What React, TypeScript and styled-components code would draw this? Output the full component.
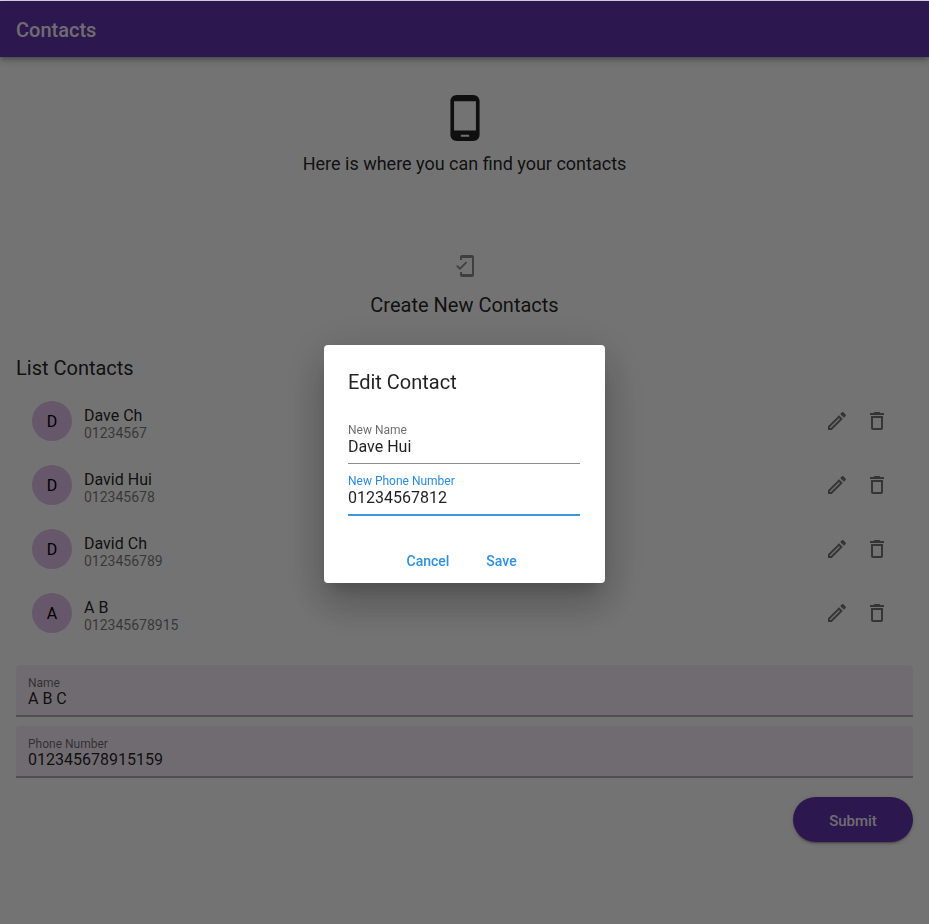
import React from 'react';
import styled, { createGlobalStyle } from 'styled-components';
import { MdPhoneAndroid, MdMobileFriendly, MdOutlineEdit, MdDeleteOutline } from 'react-icons/md';

const GlobalStyle = createGlobalStyle`
  * { box-sizing: border-box; }
  body {
    margin: 0;
    background: #fafafa;
    font-family: Roboto, sans-serif;
    overflow: hidden;
  }
  button, input { font-family: inherit; border: 0; padding: 0; background: none; outline: 0; }
`;

const Page = styled.div`
  display: flex;
  flex-direction: column;
  height: 924px;
  border-top: 1px solid #dcd6f3;
  color: rgba(0, 0, 0, 0.87);
`;

const AppBar = styled.header`
  display: flex;
  align-items: center;
  flex: none;
  height: 56px;
  padding: 2px 16px 0;
  background: #6033ab;
  color: rgba(255, 255, 255, 0.93);
  font-size: 20px;
  font-weight: 500;
  box-shadow: 0 2px 4px -1px rgba(0, 0, 0, 0.2), 0 4px 5px rgba(0, 0, 0, 0.14), 0 1px 10px rgba(0, 0, 0, 0.12);
`;

const Intro = styled.section`
  display: flex;
  flex-direction: column;
  align-items: center;
  padding-top: 36px;
  height: 197px;
`;

const IntroText = styled.p`
  margin: 9px 0 0;
  font-size: 18px;
  line-height: 24px;
`;

const Create = styled.section`
  display: flex;
  flex-direction: column;
  align-items: center;
  height: 100px;
  svg { color: rgba(0, 0, 0, 0.45); }
`;

const Heading = styled.h2`
  margin: 0;
  font-size: 20px;
  line-height: 24px;
  font-weight: 400;
`;

const CreateHeading = styled(Heading)`
  margin-top: 15px;
`;

const Content = styled.main`
  display: flex;
  flex-direction: column;
  padding: 2px 16px 0;
`;

const List = styled.ul`
  margin: 9px 0 0;
  padding: 0;
  list-style: none;
`;

const Row = styled.li`
  display: flex;
  align-items: center;
  height: 64px;
  padding: 0 24px 0 16px;
`;

const Avatar = styled.span`
  display: grid;
  place-items: center;
  width: 40px;
  height: 40px;
  margin-right: 12px;
  border-radius: 50%;
  background: #e1bee7;
  color: #000;
  font-size: 16px;
`;

const Details = styled.div`
  flex: 1;
  padding-top: 6px;
`;

const ContactName = styled.div`
  font-size: 16px;
  line-height: 18px;
`;

const Phone = styled.div`
  font-size: 14px;
  line-height: 17px;
  color: rgba(0, 0, 0, 0.54);
`;

const Actions = styled.div`
  display: flex;
  gap: 16px;
`;

const IconButton = styled.button`
  display: flex;
  color: rgba(0, 0, 0, 0.54);
`;

const FilledField = styled.label`
  display: flex;
  flex-direction: column;
  height: 52px;
  margin-bottom: 9px;
  padding: 11px 12px 0;
  border-bottom: 2px solid #b0a8b2;
  border-radius: 4px 4px 0 0;
  background: #f3e9f5;
`;

const Label = styled.span<{ $active?: boolean }>`
  font-size: 12px;
  line-height: 14px;
  color: ${p => (p.$active ? '#2a8bdc' : 'rgba(0, 0, 0, 0.58)')};
`;

const Input = styled.input`
  width: 100%;
  height: 20px;
  font-size: 16px;
  color: rgba(0, 0, 0, 0.87);
`;

const FilledInput = styled(Input)`
  height: 18px;
  margin-top: -1px;
`;

const Submit = styled.button`
  align-self: flex-end;
  width: 120px;
  height: 45px;
  margin-top: 10px;
  padding-top: 2px;
  border-radius: 23px;
  background: #6033ab;
  color: rgba(255, 255, 255, 0.93);
  font-size: 15px;
  font-weight: 500;
  box-shadow: 0 3px 1px -2px rgba(0, 0, 0, 0.2), 0 2px 2px rgba(0, 0, 0, 0.14), 0 1px 5px rgba(0, 0, 0, 0.12);
`;

const Scrim = styled.div`
  position: fixed;
  inset: 1px 0 0;
  display: grid;
  place-items: center;
  padding: 2px 1px 0 0;
  background: rgba(0, 0, 0, 0.54);
`;

const Dialog = styled.div`
  display: flex;
  flex-direction: column;
  width: 281px;
  height: 238px;
  padding: 25px 24.5px 0;
  border-radius: 4px;
  background: #fff;
  color: rgba(0, 0, 0, 0.87);
  box-shadow: 0 11px 15px -7px rgba(0, 0, 0, 0.2), 0 24px 38px 3px rgba(0, 0, 0, 0.14), 0 9px 46px 8px rgba(0, 0, 0, 0.12);
`;

const LineField = styled.label<{ $active?: boolean }>`
  display: flex;
  flex-direction: column;
  height: ${p => (p.$active ? 42 : 41)}px;
  margin-bottom: 10px;
  border-bottom: ${p => (p.$active ? '2px solid #3d97e3' : '1px solid #8c8c8c')};
`;

const Fields = styled.div`
  margin-top: 29px;
`;

const DialogActions = styled.div`
  display: flex;
  gap: 37px;
  margin: 26px 0 0 58.5px;
`;

const TextButton = styled.button`
  color: #2f8fe0;
  font-size: 14px;
  line-height: 18px;
  font-weight: 500;
`;

const FormBox = styled.form`
  display: flex;
  flex-direction: column;
  margin-top: 20px;
`;

const contacts = [
  { name: 'Dave Ch', phone: '01234567' },
  { name: 'David Hui', phone: '012345678' },
  { name: 'David Ch', phone: '0123456789' },
  { name: 'A B', phone: '012345678915' },
];

export default function App() {
  return (
    <>
      <GlobalStyle />
      <Page>
        <AppBar>Contacts</AppBar>
        <Intro>
          <MdPhoneAndroid size={50} />
          <IntroText>Here is where you can find your contacts</IntroText>
        </Intro>
        <Create>
          <MdMobileFriendly size={24} />
          <CreateHeading>Create New Contacts</CreateHeading>
        </Create>
        <Content>
          <Heading>List Contacts</Heading>
          <List>
            {contacts.map(c => (
              <Row key={c.name}>
                <Avatar>{c.name[0]}</Avatar>
                <Details>
                  <ContactName>{c.name}</ContactName>
                  <Phone>{c.phone}</Phone>
                </Details>
                <Actions>
                  <IconButton aria-label="Edit"><MdOutlineEdit size={24} /></IconButton>
                  <IconButton aria-label="Delete"><MdDeleteOutline size={24} /></IconButton>
                </Actions>
              </Row>
            ))}
          </List>
          <FormBox onSubmit={e => e.preventDefault()}>
            <FilledField>
              <Label>Name</Label>
              <FilledInput defaultValue="A B C" />
            </FilledField>
            <FilledField>
              <Label>Phone Number</Label>
              <FilledInput defaultValue="012345678915159" />
            </FilledField>
            <Submit>Submit</Submit>
          </FormBox>
        </Content>
      </Page>
      <Scrim>
        <Dialog role="dialog">
          <Heading>Edit Contact</Heading>
          <Fields>
            <LineField>
              <Label>New Name</Label>
              <Input defaultValue="Dave Hui" />
            </LineField>
            <LineField $active>
              <Label $active>New Phone Number</Label>
              <Input defaultValue="01234567812" />
            </LineField>
          </Fields>
          <DialogActions>
            <TextButton>Cancel</TextButton>
            <TextButton>Save</TextButton>
          </DialogActions>
        </Dialog>
      </Scrim>
    </>
  );
}
